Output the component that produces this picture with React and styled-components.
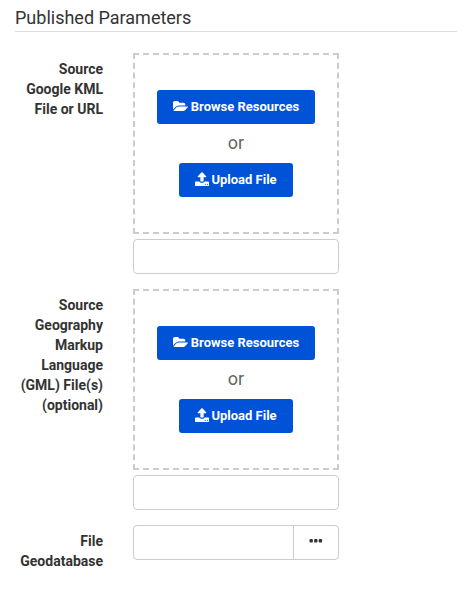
import React from 'react';
import styled, { createGlobalStyle } from 'styled-components';

const Global = createGlobalStyle`
  *, *::before, *::after { box-sizing: border-box; }
  body { margin: 0; background: #fff; font-family: Roboto, sans-serif; font-size: 14px; line-height: 20px; color: #333; }
`;
const Page = styled.main`
  width: 472px;
  height: 594px;
  padding: 7px 15px 0;
  overflow: hidden;
`;
const Heading = styled.h2`
  margin: 0 0 21px;
  height: 25px;
  border-bottom: 1px solid #ddd;
  font-size: 18px;
  font-weight: 400;
  line-height: 21px;
  color: #333;
`;
const Row = styled.div`
  display: grid;
  grid-template-columns: 88px 206px;
  column-gap: 30px;
  margin-bottom: 15px;
`;
const Label = styled.label`
  padding-top: 6px;
  text-align: right;
  font-weight: 700;
  white-space: pre-line;
`;
const DropZone = styled.div`
  display: flex;
  flex-direction: column;
  align-items: center;
  height: 181px;
  padding-top: 35px;
  border: 2px dashed #ccc;
`;
const Button = styled.button`
  display: flex;
  align-items: center;
  justify-content: center;
  gap: ${(p) => p.$gap}px;
  width: ${(p) => p.$width}px;
  height: 34px;
  padding: 0;
  border: 0;
  border-radius: 3px;
  background: #0052d6;
  color: #fff;
  font: 700 13px/20px Roboto, sans-serif;
`;
const Glyph = styled.svg`
  flex: none;
  width: ${(p) => p.$width}px;
  height: ${(p) => p.$height}px;
  margin-bottom: 2px;
  fill: currentColor;
`;
const Or = styled.span`
  margin: 9px 0 10px;
  font-size: 18px;
  color: #666;
`;
const Input = styled.input`
  display: block;
  width: 100%;
  height: 35px;
  margin-top: 5px;
  border: 1px solid #ccc;
  border-radius: 4px;
`;
const PickerGroup = styled.div`
  display: flex;
  height: 35px;
  border: 1px solid #ccc;
  border-radius: 4px;
`;
const PickerInput = styled.input`
  flex: 1;
  min-width: 0;
  border: 0;
  background: transparent;
`;
const MoreButton = styled.button`
  display: flex;
  align-items: center;
  justify-content: center;
  width: 45px;
  padding: 0 0 3px;
  border: 0;
  border-left: 1px solid #ccc;
  background: transparent;
  color: #333;
`;

function FolderIcon() {
  return (
    <Glyph $width={15} $height={10} viewBox="0 128 1879 1408" preserveAspectRatio="none">
      <path d="M1879 952q0 31-31 66l-336 396q-43 51-120.5 86.5t-143.5 35.5h-1088q-34 0-60.5-13t-26.5-43q0-31 31-66l336-396q43-51 120.5-86.5t143.5-35.5h1088q34 0 60.5 13t26.5 43zm-343-344v160h-832q-94 0-197 47.5t-164 119.5l-337 396-5 6q0-4-.5-12.5t-.5-12.5v-960q0-92 66-158t158-66h320q92 0 158 66t66 158v32h544q92 0 158 66t66 158z" />
    </Glyph>
  );
}

function UploadIcon() {
  return (
    <Glyph $width={14} $height={14} viewBox="64 48 1664 1616" preserveAspectRatio="none">
      <path d="M1344 1472q0-26-19-45t-45-19-45 19-19 45 19 45 45 19 45-19 19-45zm256 0q0-26-19-45t-45-19-45 19-19 45 19 45 45 19 45-19 19-45zm128-224v320q0 40-28 68t-68 28h-1472q-40 0-68-28t-28-68v-320q0-40 28-68t68-28h427q21 56 70.5 92t110.5 36h256q61 0 110.5-36t70.5-92h427q40 0 68 28t28 68zm-325-648q-17 40-59 40h-256v448q0 26-19 45t-45 19h-256q-26 0-45-19t-19-45v-448h-256q-42 0-59-40-17-39 14-69l448-448q18-19 45-19t45 19l448 448q31 30 14 69z" />
    </Glyph>
  );
}

function SourceField({ label }) {
  return (
    <Row>
      <Label>{label}</Label>
      <div>
        <DropZone>
          <Button $width={158} $gap={3}><FolderIcon />Browse Resources</Button>
          <Or>or</Or>
          <Button $width={114} $gap={2}><UploadIcon />Upload File</Button>
        </DropZone>
        <Input />
      </div>
    </Row>
  );
}

export default function App() {
  return (
    <Page>
      <Global />
      <Heading>Published Parameters</Heading>
      <SourceField label={'Source\nGoogle KML\nFile or URL'} />
      <SourceField label={'Source\nGeography\nMarkup\nLanguage\n(GML) File(s)\n(optional)'} />
      <Row>
        <Label>{'File\nGeodatabase'}</Label>
        <PickerGroup>
          <PickerInput />
          <MoreButton aria-label="More">
            <svg width="14" height="4" viewBox="0 0 14 4" fill="currentColor">
              <rect x="0.5" width="3.4" height="3.4" rx="1" />
              <rect x="5.1" width="3.4" height="3.4" rx="1" />
              <rect x="9.7" width="3.4" height="3.4" rx="1" />
            </svg>
          </MoreButton>
        </PickerGroup>
      </Row>
    </Page>
  );
}
